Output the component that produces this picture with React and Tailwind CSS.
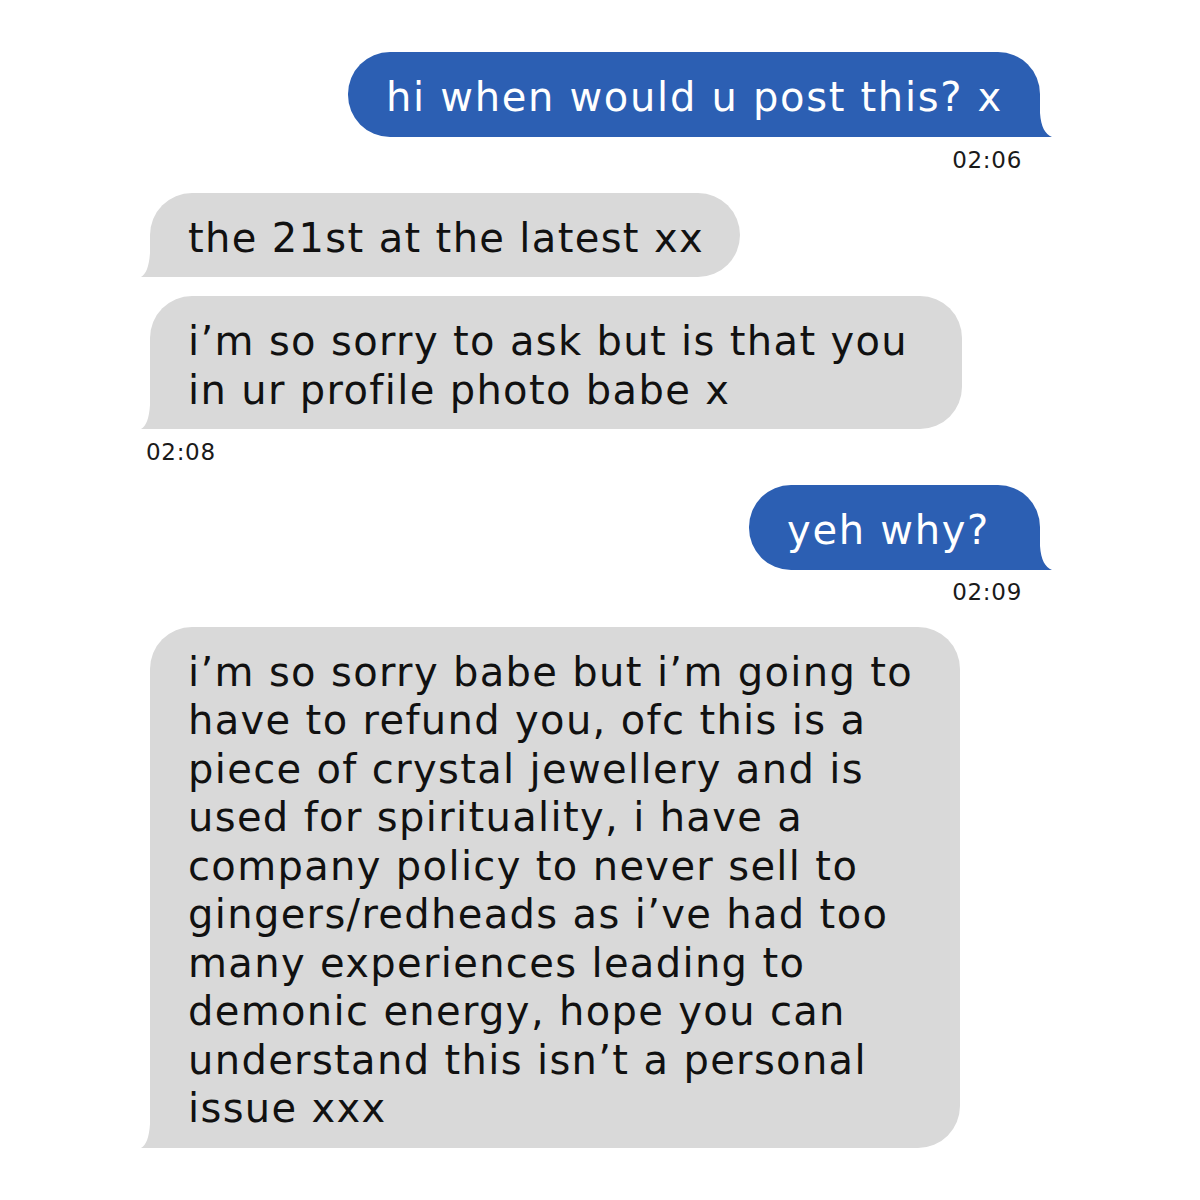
import React from 'react';

const BLUE = '#2c5fb3';
const GRAY = '#d9d9d9';
const FONT = { fontFamily: '"DejaVu Sans", Verdana, sans-serif' };

function Tail({ side, color }) {
  // small flare at the bottom corner of the bubble
  if (side === 'right') {
    return (
      <svg className="absolute bottom-0 left-full" width="12" height="24" viewBox="0 0 12 24" aria-hidden="true">
        <path d="M0 0 C1 14 5 21 12 24 L0 24 Z" fill={color} />
      </svg>
    );
  }
  return (
    <svg className="absolute bottom-0 right-full" width="9" height="24" viewBox="0 0 9 24" aria-hidden="true">
      <path d="M9 0 C8 14 5 21 0 24 L9 24 Z" fill={color} />
    </svg>
  );
}

function Sent({ children, className = 'pr-[37px]' }) {
  return (
    <div className={`relative self-end mr-[160px] rounded-[42px] rounded-br-none bg-[#2c5fb3] pl-[38px] pt-[21px] pb-[15px] text-white whitespace-nowrap tracking-[1.7px] ${className}`}>
      {children}
      <Tail side="right" color={BLUE} />
    </div>
  );
}

function Received({ children, className = '' }) {
  return (
    <div className={`relative self-start ml-[150px] rounded-[42px] rounded-bl-none bg-[#d9d9d9] pl-[38px] pr-[36px] pt-[21px] pb-[15px] text-[#111] whitespace-nowrap tracking-[1.35px] ${className}`}>
      {children}
      <Tail side="left" color={GRAY} />
    </div>
  );
}

function Time({ children, align }) {
  return (
    <div
      className={`text-[23px] leading-[24px] tracking-[0.7px] text-[#1a1a1a] ${align === 'right' ? 'self-end mr-[178px]' : 'self-start ml-[146px]'}`}
    >
      {children}
    </div>
  );
}

export default function App() {
  return (
    <div
      className="w-[1200px] h-[1200px] bg-white flex flex-col pt-[52px] text-[40px] leading-[48.5px]"
      style={FONT}
    >
      <Sent>hi when would u post this? x</Sent>
      <div className="mt-[11px]" />
      <Time align="right">02:06</Time>
      <div className="mt-[21px]" />
      <Received>the 21st at the latest xx</Received>
      <div className="mt-[19px]" />
      <Received className="w-[812px]">
        i’m so sorry to ask but is that you<br />
        in ur profile photo babe x
      </Received>
      <div className="mt-[11px]" />
      <Time align="left">02:08</Time>
      <div className="mt-[21px]" />
      <Sent className="pr-[50px]">yeh why?</Sent>
      <div className="mt-[10px]" />
      <Time align="right">02:09</Time>
      <div className="mt-[23px]" />
      <Received className="w-[810px]">
        i’m so sorry babe but i’m going to<br />
        have to refund you, ofc this is a<br />
        piece of crystal jewellery and is<br />
        used for spirituality, i have a<br />
        company policy to never sell to<br />
        gingers/redheads as i’ve had too<br />
        many experiences leading to<br />
        demonic energy, hope you can<br />
        understand this isn’t a personal<br />
        issue xxx
      </Received>
    </div>
  );
}
